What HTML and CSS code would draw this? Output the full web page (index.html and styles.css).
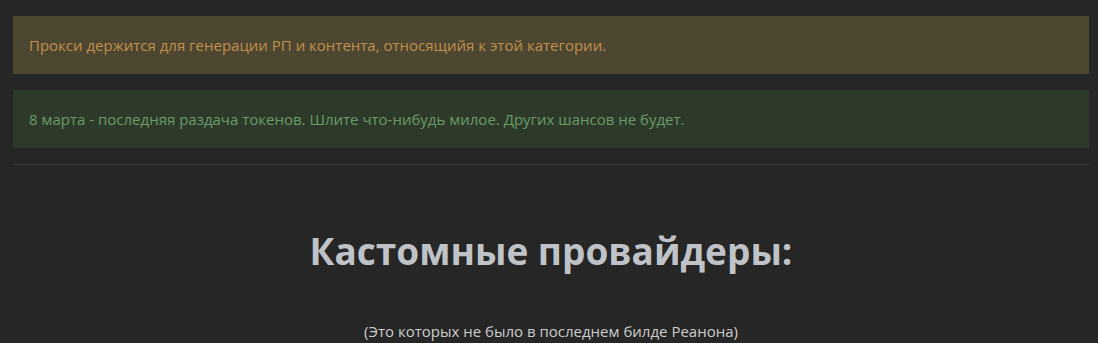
FILE: index.html
```html
<!DOCTYPE html>
<html lang="ru">
<head>
    <meta charset="UTF-8">
    <meta name="viewport" content="width=device-width, initial-scale=1.0">
    <title>Прокси</title>
    <link rel="stylesheet" href="styles.css">
</head>
<body>
    <div class="page">
        <div class="notice notice-warn">Прокси держится для генерации РП и контента, относящийя к этой категории.</div>
        <div class="notice notice-ok">8 марта - последняя раздача токенов. Шлите что-нибудь милое. Других шансов не будет.</div>
        <hr class="divider">

        <h1 class="section-title">Кастомные провайдеры:</h1>
        <p class="section-note">(Это которых не было в последнем билде Реанона)</p>
    </div>
</body>
</html>
```

FILE: styles.css
```css
body {
    font-family: "Open Sans", "Noto Sans", sans-serif;
    font-size: 15px;
    background-color: #262626;
    color: #cccccc;
    margin: 0;
    padding: 16px 9px 0 13px;
}
.page {
    display: flex;
    flex-direction: column;
    gap: 16px;
}
.notice {
    padding: 18px 16px;
    line-height: 22px;
}
.notice-warn {
    background-color: #4d4631;
    color: #c0904c;
}
.notice-ok {
    background-color: #2e3a29;
    color: #6a9b6a;
}
.divider {
    border: none;
    border-top: 1px solid #3a3a3a;
    margin: 0;
}
.section-title {
    text-align: center;
    color: #bfc3c8;
    font-size: 37px;
    font-weight: bold;
    line-height: 50px;
    margin: 45px 0 0;
}
.section-note {
    text-align: center;
    line-height: 20px;
    margin: 29px 0 0;
}
```
